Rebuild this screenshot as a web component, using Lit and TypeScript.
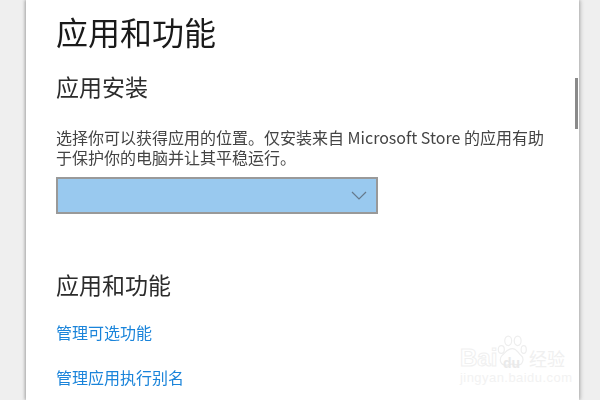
import { LitElement, html, css } from "lit";
import { customElement } from "lit/decorators.js";

@customElement("app-root")
export class AppRoot extends LitElement {
  static styles = css`
    :host {
      display: block;
      width: 600px;
      height: 400px;
      overflow: hidden;
      background: #efefef;
      font-family: "Noto Sans CJK SC", "Noto Sans", sans-serif;
      color: #1f1f1f;
    }
    .window {
      position: relative;
      box-sizing: border-box;
      width: 553px;
      height: 400px;
      margin-left: 26px;
      padding: 0 0 0 30px;
      background: #fff;
      box-shadow: -1px 0 3px #aaa, 1px 0 4px #aaa;
    }
    .content { filter: blur(0.4px); }
    h1 {
      margin: 0;
      padding-top: 9px;
      font-size: 32px;
      line-height: 44px;
      font-weight: 400;
      color: #1a1a1a;
    }
    h2 {
      margin: 0;
      font-size: 23px;
      line-height: 30px;
      font-weight: 400;
      color: #2b2b2b;
    }
    .install { margin-top: 18px; }
    p {
      margin: 26px 0 0;
      width: 500px;
      font-size: 16px;
      line-height: 20px;
      color: #444;
    }
    .select {
      box-sizing: border-box;
      display: flex;
      align-items: center;
      justify-content: flex-end;
      width: 322px;
      height: 37px;
      margin-top: 10px;
      padding-right: 9px;
      background: #99c9ef;
      border: 2px solid #999;
    }
    .select svg { display: block; }
    .features { margin-top: 55px; }
    .links { display: flex; flex-direction: column; gap: 23px; margin-top: 22px; }
    a {
      font-size: 16px;
      line-height: 22px;
      color: #1a84da;
      text-decoration: none;
    }
    .thumb {
      position: absolute;
      right: 1px;
      top: 78px;
      width: 3px;
      height: 51px;
      background: #8a8a8a;
    }
    .mark {
      position: absolute;
      left: 434px;
      top: 334px;
      width: 110px;
      height: 64px;
      font-family: "Liberation Sans", "Noto Sans CJK SC", sans-serif;
      pointer-events: none;
    }
    .mark svg { position: absolute; left: 37px; top: 1px; }
    .mark .bai { position: absolute; left: 0; top: 12px; font-size: 24px; line-height: 24px; font-weight: 700; color: #fff; -webkit-text-stroke: 1px #f0f0f0; }
    .mark .du { position: absolute; left: 43px; top: 21px; font-size: 14px; line-height: 16px; font-weight: 700; color: #eaeaea; }
    .mark .jy { position: absolute; left: 69px; top: 14px; font-size: 18px; line-height: 24px; white-space: nowrap; color: #f0f0f0; }
    .mark .url { position: absolute; left: 0; top: 36px; font-size: 13px; line-height: 16px; letter-spacing: .45px; white-space: nowrap; color: #f2f2f2; }
  `;

  render() {
    return html`
      <div class="window">
        <div class="content">
          <h1>应用和功能</h1>
          <h2 class="install">应用安装</h2>
          <p>选择你可以获得应用的位置。仅安装来自 Microsoft Store 的应用有助于保护你的电脑并让其平稳运行。</p>
          <div class="select">
            <svg width="16" height="9" viewBox="0 0 16 9" fill="none" stroke="#66798c" stroke-width="1.2">
              <path d="M1 1l7 7 7-7" />
            </svg>
          </div>
          <h2 class="features">应用和功能</h2>
          <div class="links">
            <a>管理可选功能</a>
            <a>管理应用执行别名</a>
          </div>
        </div>
        <div class="thumb"></div>
        <div class="mark">
          <svg width="31" height="34" viewBox="0 0 36 38" fill="#fff" stroke="#eeeeee" stroke-width="1.4">
            <ellipse cx="5" cy="16" rx="3.5" ry="4.5" />
            <ellipse cx="13" cy="6" rx="4" ry="5.5" />
            <ellipse cx="24" cy="6" rx="4" ry="5.5" />
            <ellipse cx="31" cy="16" rx="3" ry="4.5" />
            <path d="M18 15c5 0 6 5 10 8s2 11-3 11-5-1-8-1-5 2-9 1-6-7-2-11 6-8 12-8z" />
          </svg>
          <span class="bai">Bai</span>
          <span class="du">du</span>
          <span class="jy">经验</span>
          <span class="url">jingyan.baidu.com</span>
        </div>
      </div>
    `;
  }
}
